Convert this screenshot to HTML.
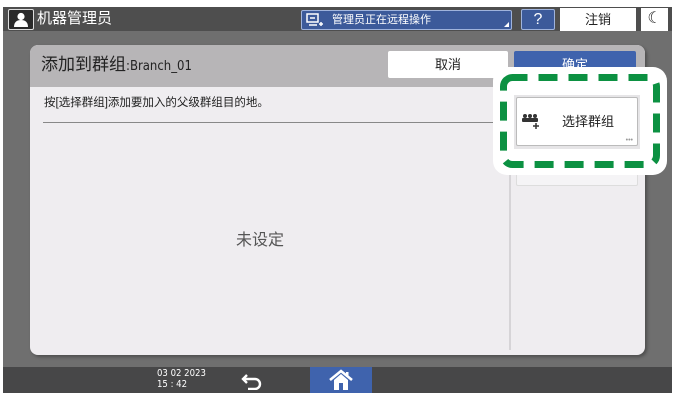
<!DOCTYPE html>
<html><head><meta charset="utf-8"><style>
*{margin:0;padding:0;box-sizing:border-box}
body{width:675px;height:401px;background:#fff;position:relative;overflow:hidden;font-family:"Liberation Sans","Noto Sans CJK SC",sans-serif}
.a{position:absolute}
</style></head><body>
<div class="a" style="left:3px;top:7px;width:669px;height:360px;background:#6f6f6f"></div>
<div class="a" style="left:3px;top:7px;width:669px;height:24px;background:#4e4e4e"></div>
<div class="a" style="left:8px;top:9px;width:26px;height:21px;background:#2a2a2a;border:1px solid #ddd;border-radius:2px">
<svg width="24" height="19" viewBox="0 0 24 19"><circle cx="12" cy="6.5" r="3.6" fill="#fff"/><path d="M5 17c0-5 3-7 7-7s7 2 7 7z" fill="#fff"/></svg></div>
<div class="a" style="left:37px;top:9px;color:#fff;font-size:15px;line-height:20px">机器管理员</div>
<div class="a" style="left:301px;top:10px;width:211px;height:20px;background:#3c5a9a;border:1px solid #9fb3dc;border-radius:2px;color:#fff;font-size:11px;line-height:18px;padding-left:30px">管理员正在远程操作
<svg class="a" style="left:4px;top:2px" width="18" height="14" viewBox="0 0 18 14"><rect x="1" y="1" width="11" height="8" fill="none" stroke="#fff" stroke-width="1.5"/><path d="M4 5h5M3 12h8M13 11h4M15 9v4" stroke="#fff" stroke-width="1.5"/></svg>
<div class="a" style="right:2px;bottom:2px;width:0;height:0;border-left:5px solid transparent;border-bottom:5px solid #fff"></div></div>
<div class="a" style="left:521px;top:9px;width:34px;height:21px;background:#3c5a9a;border:1px solid #9fb3dc;border-radius:2px;color:#fff;font-size:16px;text-align:center;line-height:19px">?</div>
<div class="a" style="left:560px;top:8px;width:76px;height:23px;background:#fff;font-size:13px;text-align:center;line-height:23px;color:#222">注销</div>
<div class="a" style="left:641px;top:8px;width:27px;height:23px;background:#fff;font-size:16px;text-align:center;line-height:22px;color:#222">☾</div>

<div class="a" style="left:30px;top:45px;width:615px;height:310px;background:#efedf0;border-radius:8px;overflow:hidden;box-shadow:2px 2px 3px rgba(0,0,0,.3)">
<div class="a" style="left:0;top:0;width:615px;height:42px;background:#b7b5b7"></div>
<div class="a" style="left:11px;top:9px;font-size:17px;color:#222;line-height:22px">添加到群组<span style="font-size:13px;font-family:'DejaVu Sans Condensed','Liberation Sans Narrow',sans-serif">:Branch_01</span></div>
<div class="a" style="left:358px;top:6px;width:120px;height:27px;background:#fff;border-radius:2px;font-size:13px;text-align:center;line-height:27px;color:#222">取消</div>
<div class="a" style="left:484px;top:6px;width:122px;height:27px;background:#3f63ad;border-radius:2px;font-size:13px;text-align:center;line-height:27px;color:#fff">确定</div>
<div class="a" style="left:14px;top:50px;font-size:11.5px;color:#222;line-height:16px">按[选择群组]添加要加入的父级群组目的地。</div>
<div class="a" style="left:13px;top:77px;width:457px;height:1px;background:#888"></div>
<div class="a" style="left:479px;top:42px;width:2px;height:263px;background:#d6d4d7"></div>
<div class="a" style="left:206px;top:181px;font-size:16px;color:#555">未设定</div>
<div class="a" style="left:486px;top:105px;width:122px;height:36px;background:#f5f4f6;border:1px solid #ddd;border-radius:2px"></div>
</div>

<div class="a" style="left:493px;top:67px;width:174px;height:108px;background:#fff;border-radius:14px"></div>
<svg class="a" style="left:493px;top:67px" width="174" height="108" viewBox="0 0 174 108"><rect x="10.5" y="10.5" width="153" height="87" rx="9" fill="none" stroke="#0c9142" stroke-width="7" stroke-dasharray="19 11" stroke-dashoffset="4"/></svg>
<div class="a" style="left:514px;top:95px;width:126px;height:54px;background:#e6e5e7"></div>
<div class="a" style="left:516px;top:97px;width:122px;height:49px;background:#fff;border:1px solid #bbb;border-radius:2px;font-size:13px;color:#222;line-height:47px;padding-left:45px">选择群组
<svg class="a" style="left:5px;top:15px" width="20" height="16" viewBox="0 0 20 16"><g fill="#333"><circle cx="3" cy="3" r="2"/><circle cx="8" cy="3" r="2"/><circle cx="13" cy="3" r="2"/><rect x="0" y="5" width="16" height="4" rx="1"/></g><path d="M14 10v6M11 13h6" stroke="#333" stroke-width="1.5"/></svg>
<div class="a" style="right:4px;bottom:0;font-size:7px;line-height:8px;color:#999">•••</div></div>

<div class="a" style="left:3px;top:367px;width:669px;height:26px;background:#474748"></div>
<div class="a" style="left:157px;top:368px;color:#fff;font-size:9.5px;line-height:11px;font-family:'DejaVu Sans Condensed',sans-serif">03 02 2023<br>15 : 42</div>
<svg class="a" style="left:240px;top:372px" width="24" height="18" viewBox="0 0 24 18"><path d="M7 3L3 7l4 4M3 7h12a5 5 0 010 10H8" fill="none" stroke="#fff" stroke-width="2.4"/></svg>
<div class="a" style="left:310px;top:367px;width:62px;height:26px;background:#3f63ad"></div>
<svg class="a" style="left:328px;top:369px" width="26" height="22" viewBox="0 0 26 22"><path d="M2 11L13 2l11 9" fill="none" stroke="#fff" stroke-width="2.6"/><path d="M6 11v10h14V11L13 5z" fill="#fff"/><rect x="11" y="14" width="4" height="7" fill="#3f63ad"/><rect x="18" y="3" width="2.5" height="5" fill="#fff"/></svg>
</body></html>
